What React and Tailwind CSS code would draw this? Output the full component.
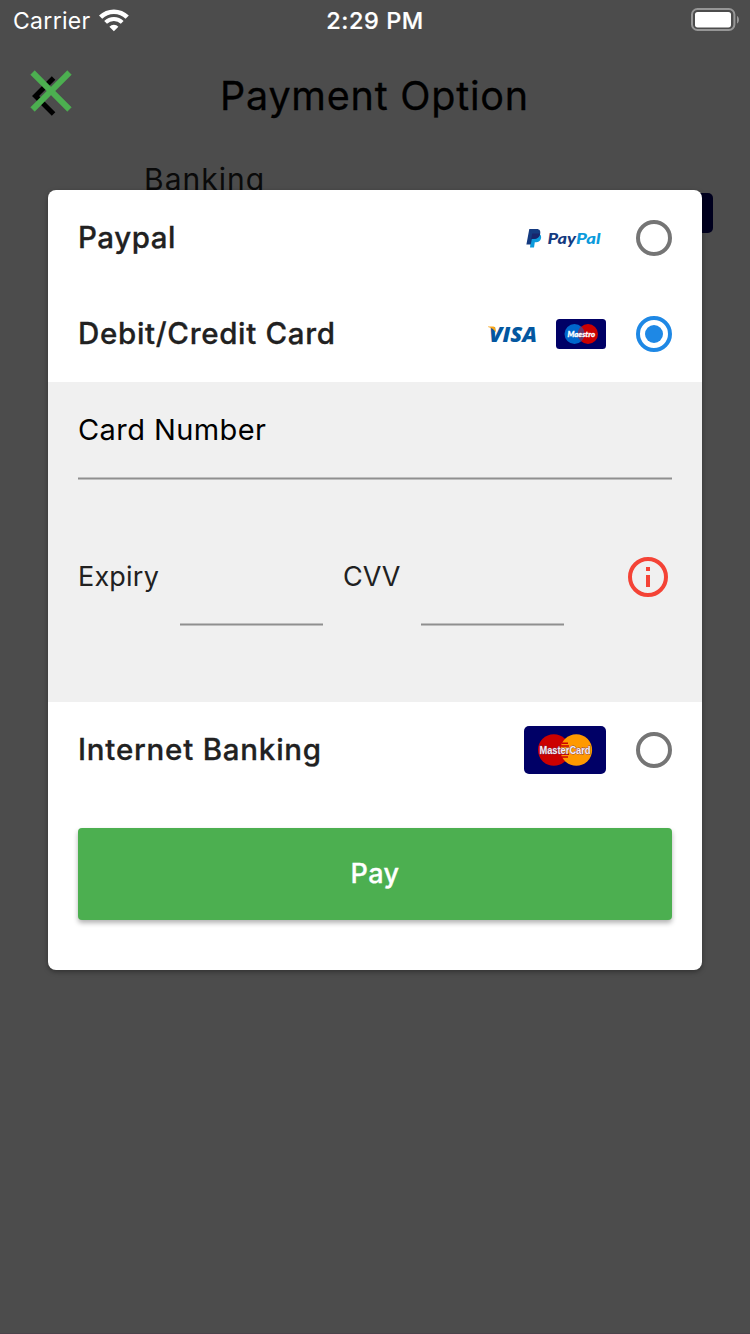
import React from "react";

function StatusBar() {
  return (
    <div className="flex h-10 items-center justify-between pl-[13px] pr-[11px] text-white">
      <div className="flex w-[150px] items-center gap-2">
        <span className="pt-px text-[23px] leading-10 tracking-[0.3px]">Carrier</span>
        <svg width="30" height="23" viewBox="0 0 30 23" fill="none">
          <path d="M1.6 8.2a19 19 0 0 1 26.6 0" stroke="#fff" strokeWidth="4.6" />
          <path d="M6.6 13.4a12 12 0 0 1 16.6 0" stroke="#fff" strokeWidth="4" />
          <path d="M10.4 17.7a6.3 6.3 0 0 1 9 0L14.9 22.2z" fill="#fff" />
        </svg>
      </div>
      <span className="pt-px pr-[2px] text-[23.5px] font-medium leading-10 tracking-[0.55px] [-webkit-text-stroke:0.2px]">2:29 PM</span>
      <div className="flex w-[150px] justify-end">
        <svg width="48" height="24" viewBox="0 0 48 24">
          <rect x="1" y="1" width="42.4" height="21" rx="5.5" fill="none" stroke="#969696" strokeWidth="2" />
          <rect x="4" y="4" width="36" height="15.4" rx="2.6" fill="#fff" />
          <path d="M46 8c2.6 1.2 2.6 6.4 0 7.6z" fill="#969696" />
        </svg>
      </div>
    </div>
  );
}

function CloseIcon() {
  return (
    <svg className="absolute left-4 top-[56px]" width="70" height="70" viewBox="0 0 24 24" fill="#4caf50" stroke="#4caf50" strokeWidth="0.12">
      <path d="M19 6.41L17.59 5 12 10.59 6.41 5 5 6.41 10.59 12 5 17.59 6.41 19 12 13.41 17.59 19 19 17.59 13.41 12z" />
    </svg>
  );
}

function Radio({ checked }) {
  const color = checked ? "#1e88e5" : "#757575";
  return (
    <svg width="36" height="36" viewBox="0 0 36 36">
      <circle cx="18" cy="18" r="16" fill="none" stroke={color} strokeWidth="4" />
      {checked && <circle cx="18" cy="18" r="9" fill={color} />}
    </svg>
  );
}

function PaypalLogo() {
  return (
    <svg width="76" height="22" viewBox="0 0 76 22" fontFamily="Lato, sans-serif">
      <path d="M5.5 7h7.8c2.4 1.3 2.3 4.6.7 6.5-1.3 1.6-3.2 1.8-5.2 1.8L8 20.4H4z" fill="#0c9bdc" />
      <path d="M3.3 2h7.3c3.3 0 4.2 2.2 3.5 4.9-.8 3.2-3 5-6.3 5H5.9L4.7 17.6H.4z" fill="#143a80" />
      <path d="M6.2 6.6h7.9c-.6 3.7-2.9 5.3-6.3 5.3H5.2z" fill="#18246b" />
      <text x="21.5" y="17" fontSize="15.5" fontWeight="900" fontStyle="italic" fill="#143a80" textLength="28.5" lengthAdjust="spacingAndGlyphs">Pay</text>
      <text x="50" y="17" fontSize="15.5" fontWeight="900" fontStyle="italic" fill="#0c9bdc" textLength="24.5" lengthAdjust="spacingAndGlyphs">Pal</text>
    </svg>
  );
}

function VisaLogo() {
  return (
    <svg className="overflow-visible" width="50" height="30" viewBox="0 0 50 30">
      <text x="3" y="22.5" fontFamily="Open Sans, sans-serif" fontSize="21.5" fontWeight="800" fontStyle="italic" fill="#0357a0" textLength="48" lengthAdjust="spacingAndGlyphs">VISA</text>
      <path d="M2 7.5h5.2c1.6 0 2 1 2.3 2.2l.8 4C8.5 10.8 5.5 8.7 2 8z" fill="#f9a51a" />
    </svg>
  );
}

function MaestroLogo() {
  return (
    <svg width="50" height="30" viewBox="0 0 50 30">
      <rect width="50" height="30" rx="3.5" fill="#000066" />
      <circle cx="18.5" cy="15" r="10" fill="#0066cc" />
      <circle cx="32" cy="15" r="10" fill="#cc0000" />
      <path d="M25.2 7.6a10 10 0 0 1 0 14.8a10 10 0 0 1 0-14.8z" fill="#67396c" />
      <text x="11.5" y="17.6" fontFamily="Lato, sans-serif" fontSize="7.5" fontWeight="900" fontStyle="italic" fill="#fff" textLength="27.5" lengthAdjust="spacingAndGlyphs" stroke="#fff" strokeWidth="0.3">Maestro</text>
    </svg>
  );
}

function MasterCardLogo() {
  return (
    <svg width="82" height="48" viewBox="0 0 82 48">
      <rect width="82" height="48" rx="5" fill="#000066" />
      <circle cx="29.8" cy="24" r="15.8" fill="#cc0000" />
      <circle cx="52.3" cy="24" r="15.8" fill="#ff9900" />
      <path d="M38 17.3h6M37 20h8M37 28.3h8M38 31h6" stroke="#cc0000" strokeWidth="1.5" />
      <text x="15.5" y="28" fontFamily="Liberation Sans, sans-serif" fontSize="11" fontWeight="700" fill="#f5eef5" stroke="#7d3a5c" strokeWidth="0.8" paintOrder="stroke" textLength="51" lengthAdjust="spacingAndGlyphs">MasterCard</text>
    </svg>
  );
}

function InfoIcon() {
  return (
    <svg width="40" height="40" viewBox="0 0 40 40" fill="#f44336">
      <circle cx="20" cy="20" r="18" fill="none" stroke="#f44336" strokeWidth="4" />
      <path d="M18 10h4v4h-4zM18 18h4v12h-4z" />
    </svg>
  );
}

function Underline({ className }) {
  return <div className={"h-[3px] border-y border-[#bfbfbf] bg-[#8f8f8f] " + className} />;
}

function OptionRow({ label, logos, checked, tracking }) {
  return (
    <div className="flex h-24 items-center justify-between px-[30px]">
      <span className={"whitespace-nowrap pb-[2px] text-[29.5px] font-medium leading-9 text-[#212121] [-webkit-text-stroke:0.3px] " + tracking}>{label}</span>
      <div className="flex items-center gap-[30px]">
        <div className="flex items-center gap-5">{logos}</div>
        <Radio checked={checked} />
      </div>
    </div>
  );
}

export default function App() {
  return (
    <div className="relative flex h-[1334px] w-[750px] flex-col overflow-hidden border-b border-[#4a434a] bg-[#4c4c4c] font-['Inter',sans-serif]">
      <StatusBar />
      <header className="flex h-28 items-center pl-8">
        <svg width="48" height="48" viewBox="0 0 24 24" fill="#000">
          <path d="M11.67 3.87L9.9 2.1 0 12l9.9 9.9 1.77-1.77L3.54 12z" />
        </svg>
        <h1 className="ml-[140px] whitespace-nowrap text-[39.5px] font-normal leading-[48px] tracking-[0.78px] text-black [-webkit-text-stroke:0.3px]">Payment Option</h1>
      </header>
      <div className="flex items-start justify-between pl-36 pr-[37px]">
        <span className="mt-[9px] text-[30px] leading-9 tracking-[1px] text-[#0a0a0a]">Banking</span>
        <div className="mt-[41px] h-10 w-[68px] rounded-[5px] bg-[#00001e]" />
      </div>
      <CloseIcon />

      <div className="absolute left-12 top-[190px] flex h-[780px] w-[654px] flex-col rounded-lg bg-white shadow-[0_2px_5px_rgba(0,0,0,0.35)]">
        <OptionRow label="Paypal" tracking="tracking-[0.55px]" logos={<div className="mr-1"><PaypalLogo /></div>} />
        <OptionRow label="Debit/Credit Card" tracking="tracking-[0.68px]" checked logos={<><VisaLogo /><MaestroLogo /></>} />
        <section className="flex h-80 flex-col bg-[#f0f0f0] px-[30px]">
          <label className="mt-[30px] text-[29px] leading-9 tracking-[0.42px] text-black">Card Number</label>
          <Underline className="mt-[29px] w-full" />
          <div className="mt-[77px] flex items-start">
            <span className="mt-[2px] w-[102px] text-[27px] leading-9 tracking-[0.2px] text-[#212121]">Expiry</span>
            <Underline className="mt-[66px] w-[143px]" />
            <span className="ml-5 mt-[2px] w-[78px] text-[27px] leading-9 tracking-[0px] text-[#212121]">CVV</span>
            <Underline className="mt-[66px] w-[143px]" />
            <div className="ml-16"><InfoIcon /></div>
          </div>
        </section>
        <OptionRow label="Internet Banking" tracking="tracking-[0.78px]" logos={<MasterCardLogo />} />
        <button className="mx-[30px] mt-[30px] h-[92px] rounded-[4px] bg-[#4caf50] text-[27px] font-medium leading-9 tracking-[0.4px] text-white shadow-[0_3px_5px_rgba(0,0,0,0.3)] [-webkit-text-stroke:0.3px]">Pay</button>
      </div>
    </div>
  );
}
